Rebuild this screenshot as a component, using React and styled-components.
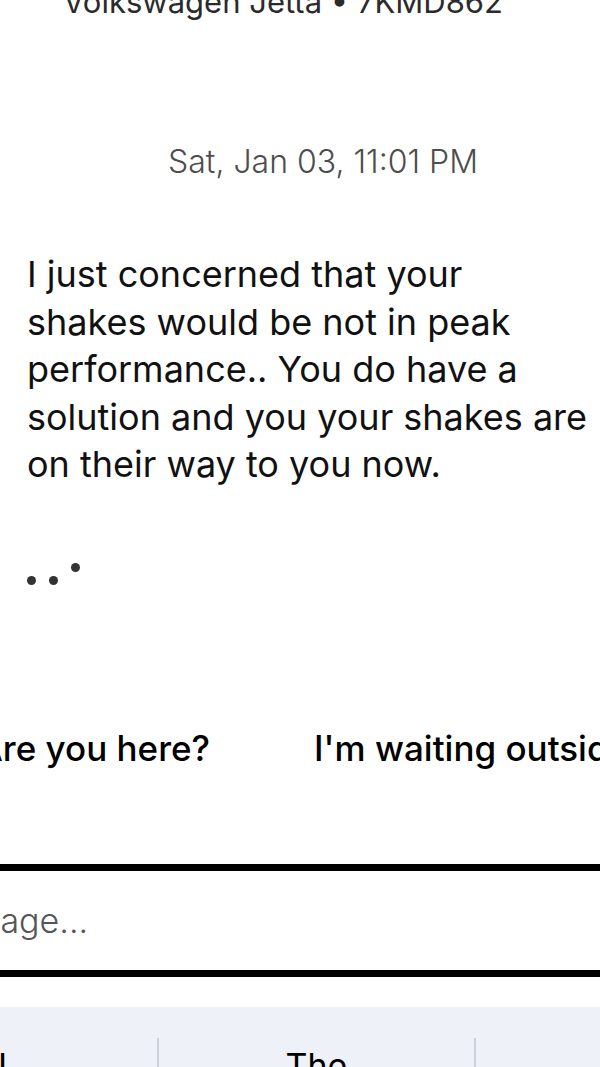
import styled, { createGlobalStyle } from "styled-components";

const GlobalStyle = createGlobalStyle`
  html, body {
    margin: 0;
    padding: 0;
    background: #fff;
    overflow: hidden;
  }
  body {
    font-family: Inter, "Open Sans", sans-serif;
  }
`;

const quickReplies = ["Are you here?", "I'm waiting outside"];
const suggestions = ["I", "The", "I'm"];

const App = () => {
  return (
    <>
      <GlobalStyle />
      <Screen>
        <Header>Volkswagen Jetta • 7KMD862</Header>
        <Timestamp>Sat, Jan 03, 11:01 PM</Timestamp>
        <Message>
          I just concerned that your
          <br />
          shakes would be not in peak
          <br />
          performance.. You do have a
          <br />
          solution and you your shakes are
          <br />
          on their way to you now.
        </Message>
        <Typing>
          <Dot />
          <Dot />
          <Dot $up />
        </Typing>
        <Replies>
          <ReplyTrack>
            {quickReplies.map((r) => (
              <Reply key={r}>{r}</Reply>
            ))}
          </ReplyTrack>
        </Replies>
        <Composer>
          <Placeholder>Message...</Placeholder>
        </Composer>
        <Keyboard>
          <Suggestions>
            {suggestions.map((s) => (
              <Suggestion key={s}>{s}</Suggestion>
            ))}
          </Suggestions>
        </Keyboard>
      </Screen>
    </>
  );
};

const Screen = styled.div`
  width: 600px;
  height: 1067px;
  overflow: hidden;
  display: flex;
  flex-direction: column;
  background: #fff;
`;

const Header = styled.div`
  margin-top: -18px;
  padding-left: 63px;
  height: 40px;
  line-height: 40px;
  font-size: 31px;
  color: #2b2b2b;
  white-space: nowrap;
`;

const Timestamp = styled.div`
  margin-top: 122px;
  padding-left: 46px;
  text-align: center;
  font-size: 32px;
  line-height: 36px;
  color: #4d4d4d;
  font-weight: 300;
`;

const Message = styled.p`
  margin: 71px 0 0;
  padding-left: 27px;
  font-size: 36px;
  line-height: 47.5px;
  color: #111;
  white-space: nowrap;
`;

const Typing = styled.div`
  display: flex;
  align-items: flex-end;
  gap: 13px;
  margin-top: 76px;
  padding-left: 27px;
  height: 20px;
`;

const Dot = styled.span`
  width: 9px;
  height: 9px;
  border-radius: 50%;
  background: #333;
  margin-bottom: ${(p) => (p.$up ? "13px" : "0")};
`;

const Replies = styled.div`
  margin-top: 141px;
  overflow: hidden;
`;

const ReplyTrack = styled.div`
  display: flex;
  gap: 104px;
  margin-left: -22px;
  white-space: nowrap;
`;

const Reply = styled.div`
  font-size: 35px;
  line-height: 44px;
  font-weight: 500;
  color: #000;
`;

const Composer = styled.div`
  margin-top: 94px;
  height: 99px;
  border-top: 7px solid #000;
  border-bottom: 7px solid #000;
  display: flex;
  align-items: center;
  overflow: hidden;
`;

const Placeholder = styled.span`
  margin-left: -85px;
  font-size: 34px;
  color: #555;
  font-weight: 300;
  white-space: nowrap;
`;

const Keyboard = styled.div`
  margin-top: 30px;
  flex: 1;
  background: #eef1f8;
  padding-top: 31px;
  overflow: hidden;
`;

const Suggestions = styled.div`
  display: grid;
  grid-template-columns: repeat(3, 317px);
  margin-left: -160px;
`;

const Suggestion = styled.div`
  text-align: center;
  font-size: 34px;
  line-height: 44px;
  padding-top: 6px;
  color: #000;
  &:first-child {
    padding-left: 8px;
  }
  & + & {
    border-left: 2px solid #cdd1d9;
  }
`;

export default App;
